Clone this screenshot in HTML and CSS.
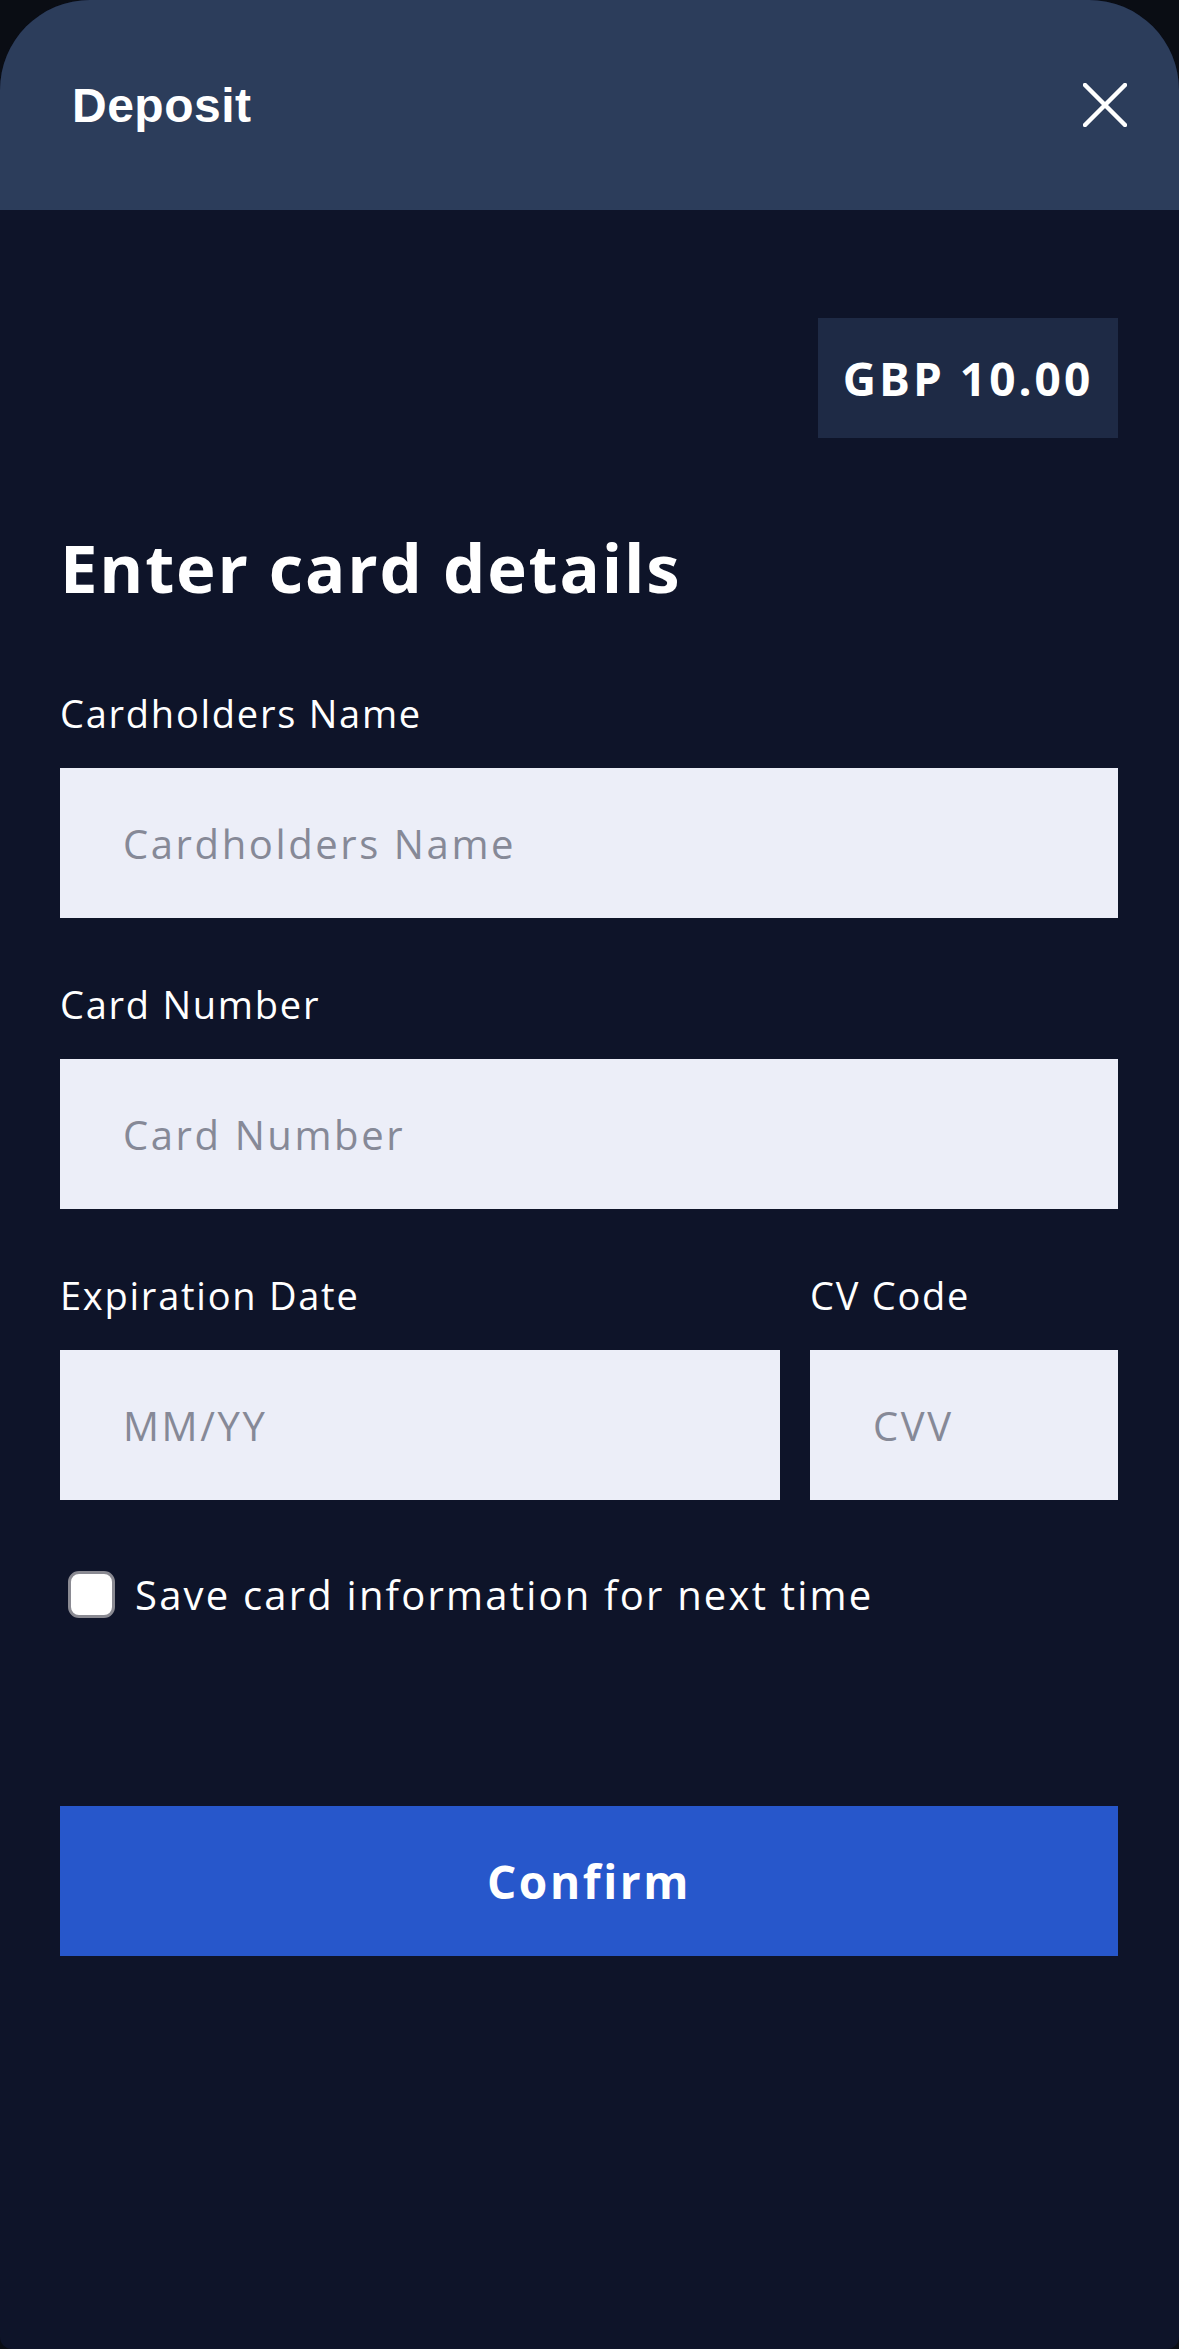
FILE: index.html
```html
<!DOCTYPE html>
<html lang="en">
<head>
  <meta charset="UTF-8">
  <title>Deposit</title>
  <link rel="stylesheet" href="styles.css">
</head>
<body>

<div class="sheet">

  <div class="sheet-header">
    <h1>Deposit</h1>
    <button class="close" aria-label="Close">
      <svg width="44" height="44" viewBox="0 0 44 44">
        <path d="M2 2 L42 42 M42 2 L2 42" stroke="#fff" stroke-width="4.5" stroke-linecap="round"/>
      </svg>
    </button>
  </div>

  <div class="sheet-body">

    <div class="amount-row">
      <div class="amount">GBP 10.00</div>
    </div>

    <h2>Enter card details</h2>

    <div class="field">
      <label>Cardholders Name</label>
      <input type="text" placeholder="Cardholders Name">
    </div>

    <div class="field">
      <label>Card Number</label>
      <input type="text" placeholder="Card Number">
    </div>

    <div class="field-row">
      <div class="field expiry">
        <label>Expiration Date</label>
        <input type="text" placeholder="MM/YY">
      </div>
      <div class="field cvv">
        <label>CV Code</label>
        <input type="text" placeholder="CVV">
      </div>
    </div>

    <label class="save">
      <span class="box"></span>
      <span>Save card information for next time</span>
    </label>

    <button class="confirm">Confirm</button>

  </div>

</div>

</body>
</html>
```

FILE: styles.css
```css
body {
  margin: 0;
  background: #0a0d14;
  font-family: "Open Sans", sans-serif;
  color: white;
}
.sheet {
  min-height: 2349px;
  background: #0e1429;
  border-radius: 90px 90px 12px 12px;
  overflow: hidden;
}
.sheet-header {
  height: 210px;
  background: #2c3d5b;
  display: flex;
  align-items: center;
  justify-content: space-between;
  padding: 0 52px 0 72px;
}
.sheet-header h1 {
  margin: 0;
  font-family: "Liberation Sans", Arial, sans-serif;
  font-weight: bold;
  font-size: 48px;
  letter-spacing: 0.5px;
}
.close {
  background: none;
  border: none;
  padding: 0;
  width: 44px;
  height: 44px;
  cursor: pointer;
}
.sheet-body {
  padding: 108px 61px 0 60px;
}
.amount-row {
  display: flex;
  justify-content: flex-end;
}
.amount {
  width: 300px;
  height: 120px;
  background: #1e2a45;
  display: flex;
  align-items: center;
  justify-content: center;
  font-weight: bold;
  font-size: 46px;
  letter-spacing: 3px;
}
h2 {
  margin: 84px 0 73px 0;
  font-size: 67px;
  font-weight: bold;
  line-height: 90px;
  letter-spacing: 1.8px;
}
.field label {
  display: block;
  font-size: 38px;
  line-height: 56px;
  letter-spacing: 1.75px;
  margin-bottom: 27px;
}
.field input {
  display: block;
  width: 100%;
  box-sizing: border-box;
  height: 150px;
  border: none;
  background: #eceef8;
  padding: 0 0 0 63px;
  font-family: "Open Sans", sans-serif;
  font-size: 40px;
  letter-spacing: 2.6px;
  outline: none;
}
.field input::placeholder {
  color: #868997;
}
.field {
  margin-bottom: 58px;
}
.field-row {
  display: flex;
  gap: 30px;
}
.expiry {
  flex: 1;
}
.cvv {
  width: 308px;
}
.save {
  display: flex;
  align-items: center;
  gap: 20px;
  padding-left: 8px;
  margin-top: 9px;
  font-size: 40px;
  letter-spacing: 2.2px;
}
.save .box {
  width: 41px;
  height: 41px;
  border: 3px solid #8a8a92;
  border-radius: 11px;
  background: white;
}
.confirm {
  display: block;
  width: 100%;
  height: 150px;
  margin-top: 184px;
  border: none;
  background: #2757cb;
  color: white;
  font-family: "Open Sans", sans-serif;
  font-weight: bold;
  font-size: 46px;
  letter-spacing: 2.6px;
}
```
